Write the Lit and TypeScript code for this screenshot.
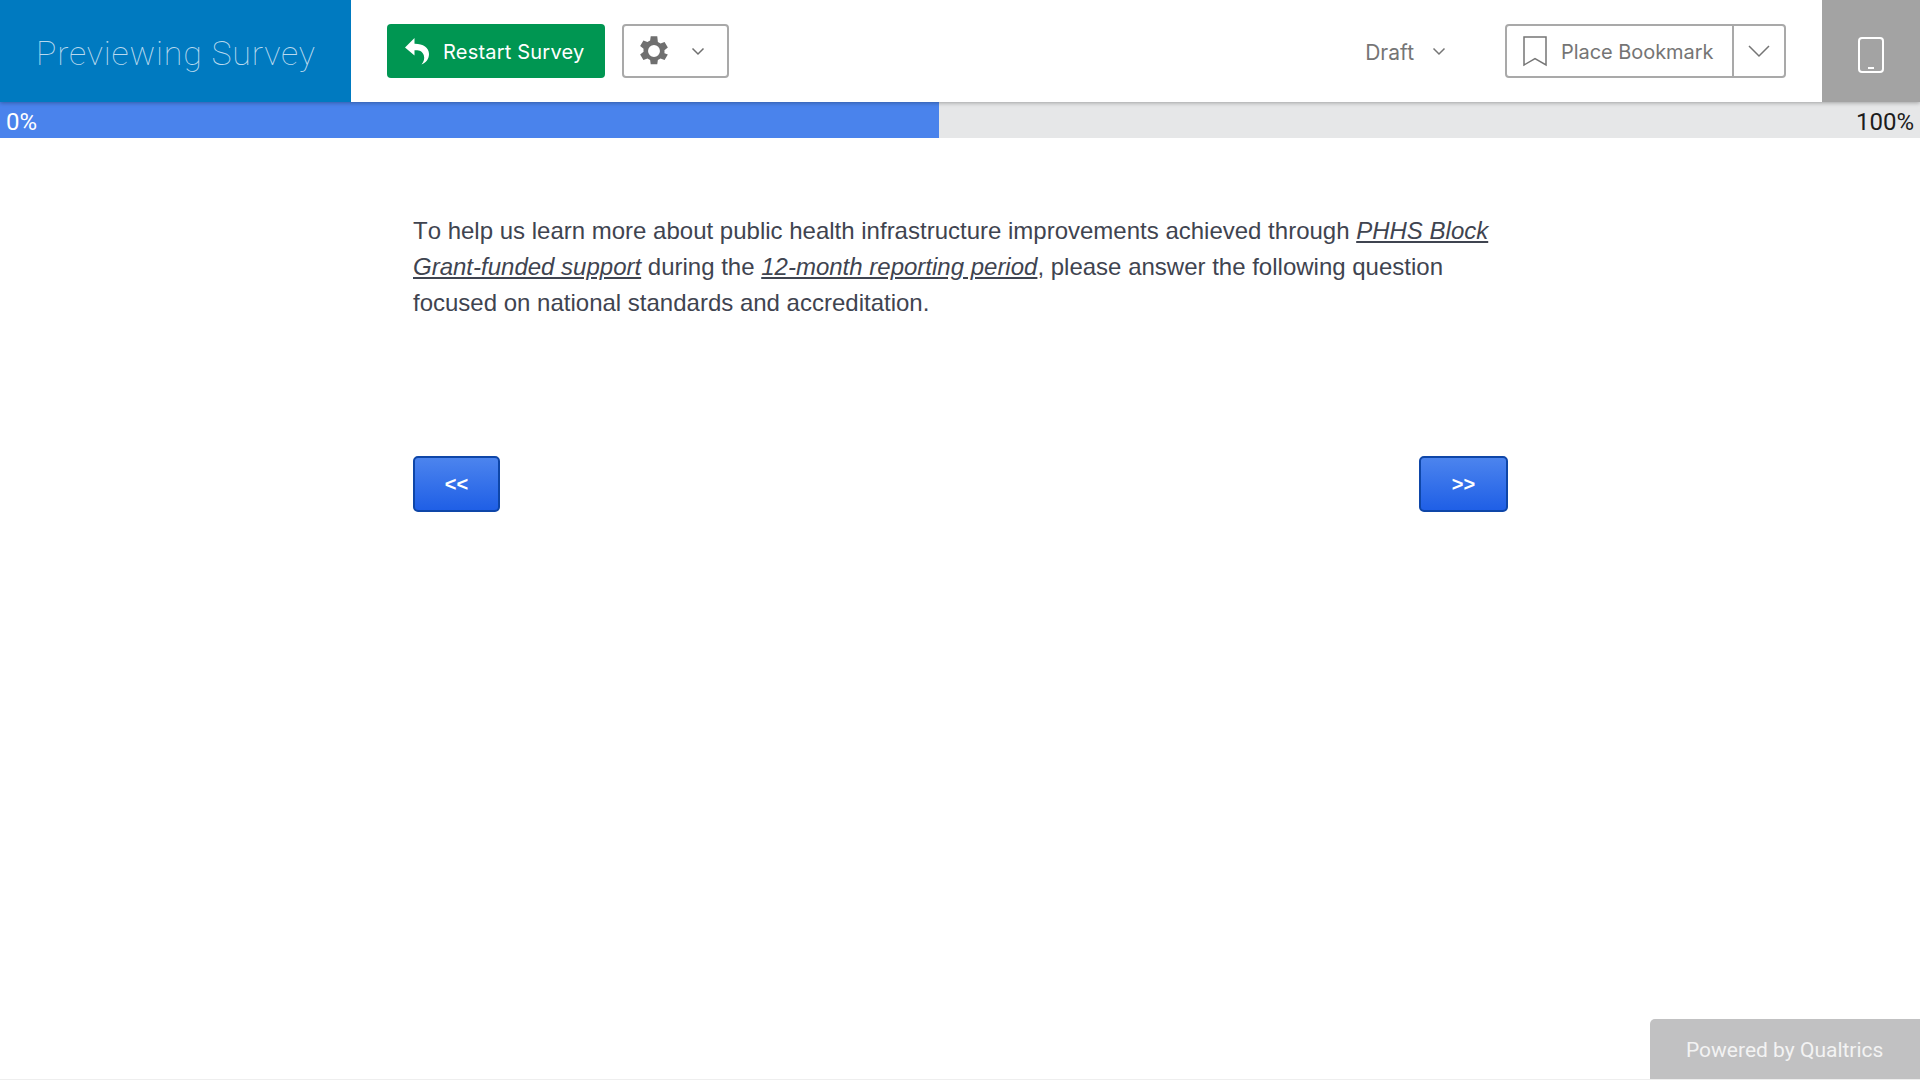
import { LitElement, html, css } from "lit";
import { customElement } from "lit/decorators.js";

@customElement("app-root")
export class AppRoot extends LitElement {
  static styles = css`
    :host { display: flex; flex-direction: column; height: 1080px; overflow: hidden; background: #fff; font-family: Roboto, "Liberation Sans", sans-serif; position: relative; }
    .bar { display: flex; align-items: center; height: 102px; flex: none; background: #fff; position: relative; z-index: 2; box-shadow: 0 1px 4px rgba(0,0,0,.3); }
    .title { width: 351px; height: 102px; background: #007ac0; color: #b9d9ee; font-weight: 100; font-size: 34px; letter-spacing: .78px; display: flex; align-items: center; padding: 3px 0 0 36px; box-sizing: border-box; flex: none; }
    .restart { margin-left: 36px; width: 218px; height: 54px; background: #009652; border-radius: 4px; color: #fff; font: 20px Inter, Roboto, sans-serif; letter-spacing: .2px; display: flex; align-items: center; box-sizing: border-box; padding-left: 17px; gap: 13px; }
    .restart span, .draft span, .bm-main span { padding-top: 2px; }
    .settings { margin-left: 17px; width: 107px; height: 54px; border: 2px solid #a9a9a9; border-radius: 4px; box-sizing: border-box; display: flex; align-items: center; padding-left: 16px; gap: 23px; }
    .spacer { flex: 1; }
    .draft { color: #757575; font: 21px Inter, Roboto, sans-serif; display: flex; align-items: center; gap: 18px; margin-right: 59px; }
    .bookmark { width: 281px; height: 54px; border: 2px solid #a9a9a9; border-radius: 4px; box-sizing: border-box; display: flex; align-items: stretch; color: #757575; font: 20px Inter, Roboto, sans-serif; margin-right: 36px; }
    .bm-main { width: 227px; box-sizing: border-box; display: flex; align-items: center; padding-left: 16px; gap: 14px; border-right: 2px solid #a9a9a9; flex: none; letter-spacing: -.05px; }
    .bm-caret { flex: 1; display: flex; align-items: center; justify-content: center; }
    .device { width: 98px; height: 102px; background: #a3a3a3; display: flex; align-items: center; justify-content: center; flex: none; padding-top: 7px; box-sizing: border-box; }
    .progress { height: 36px; background: #e6e7e8; position: relative; flex: none; display: flex; justify-content: space-between; align-items: center; padding: 4px 6px 0; font-size: 24px; color: #1c1c1c; box-sizing: border-box; }
    .fill { position: absolute; left: 0; top: 0; bottom: 0; background: #4a83ec; }
    .pct { position: relative; }
    .pct.lo { color: #fff; }
    .main { width: 1095px; margin-left: 413px; padding-top: 75px; color: #3f4450; font: 24px/36px "Liberation Sans", Arial, sans-serif; font-kerning: none; box-sizing: border-box; }
    .main p { margin: 0; }
    .main em { text-decoration: underline; }
    .nav { display: flex; justify-content: space-between; margin-top: 135px; }
    .btn { width: 89px; height: 56px; box-sizing: border-box; border: 2px solid #0e46a8; border-radius: 5px; background: linear-gradient(#4c84ee, #1f5fe6); color: #fff; font: bold 20px "Liberation Sans", Arial, sans-serif; display: flex; align-items: center; justify-content: center; }
    .nav .btn:first-child { width: 87px; }
    .powered { position: absolute; right: 0; bottom: 1px; width: 270px; height: 60px; background: #c1c1c2; color: #f3f3f3; border-radius: 5px 0 0 0; font-size: 21px; display: flex; align-items: center; box-sizing: border-box; padding: 2px 0 0 36px; }
    .rule { position: absolute; left: 0; right: 0; bottom: 0; height: 1px; background: #eee; }
  `;

  render() {
    return html`
      <div class="bar">
        <div class="title">Previewing Survey</div>
        <div class="restart">
          <svg width="26" height="28" viewBox="0 0 26 28"><path fill="#fff" d="M10.5 1 1 10.5l9.500 8v-5.200c4.500-.3 8 .8 9.300 5 1 3.200.2 6.600-2.300 9.200 4.600-1.600 7.500-5.600 7.500-10.500 0-6.600-6-10.400-14.500-10.300z"/></svg>
          <span>Restart Survey</span>
        </div>
        <div class="settings">
          <svg width="28" height="30" viewBox="3 1.500 18.800 20"><path fill="#6f6f6f" fill-rule="evenodd" d="M19.400 13a7.600 7.600 0 0 0 0-2l2.300-1.800-2.200-3.800-2.700 1.100a7.500 7.500 0 0 0-1.800-1L14.600 1.600h-4.400L9.800 4.500a7.500 7.500 0 0 0-1.800 1L5.300 4.400 3.100 8.200 5.400 10a7.600 7.600 0 0 0 0 2L3.100 13.800l2.200 3.800 2.700-1.100a7.500 7.500 0 0 0 1.800 1l.4 2.900h4.400l.4-2.900a7.500 7.500 0 0 0 1.800-1l2.700 1.100 2.200-3.800zM12.400 15.500a4 4 0 1 1 0-8 4 4 0 0 1 0 8z"/></svg>
          <svg width="14" height="9" viewBox="0 0 14 9"><path d="M1.500 1.500 7 7l5.500-5.500" fill="none" stroke="#6f6f6f" stroke-width="1.500"/></svg>
        </div>
        <div class="spacer"></div>
        <div class="draft">
          <span>Draft</span>
          <svg width="14" height="9" viewBox="0 0 14 9"><path d="M1.500 1.500 7 7l5.500-5.500" fill="none" stroke="#757575" stroke-width="1.500"/></svg>
        </div>
        <div class="bookmark">
          <div class="bm-main">
            <svg width="24" height="31" viewBox="0 0 24 31"><path d="M1 1h22v28l-11-6.500L1 29z" fill="none" stroke="#757575" stroke-width="1.500"/></svg>
            <span>Place Bookmark</span>
          </div>
          <div class="bm-caret">
            <svg width="22" height="13" viewBox="0 0 22 13"><path d="M1 1l10 10L21 1" fill="none" stroke="#757575" stroke-width="1.500"/></svg>
          </div>
        </div>
        <div class="device">
          <svg width="26" height="36" viewBox="0 0 26 36"><rect x="1" y="1" width="24" height="34" rx="3" fill="none" stroke="#fff" stroke-width="2"/><rect x="10" y="30" width="6" height="2" fill="#fff"/></svg>
        </div>
      </div>
      <div class="progress">
        <div class="fill" style="width: 939px"></div>
        <span class="pct lo">0%</span>
        <span class="pct">100%</span>
      </div>
      <div class="main">
        <p>To help us learn more about public health infrastructure improvements achieved through <em>PHHS Block Grant-funded support</em> during the <em>12-month reporting period</em>, please answer the following question focused on national standards and accreditation.</p>
        <div class="nav">
          <div class="btn">&lt;&lt;</div>
          <div class="btn">&gt;&gt;</div>
        </div>
      </div>
      <div class="powered">Powered by Qualtrics</div>
      <div class="rule"></div>
    `;
  }
}
